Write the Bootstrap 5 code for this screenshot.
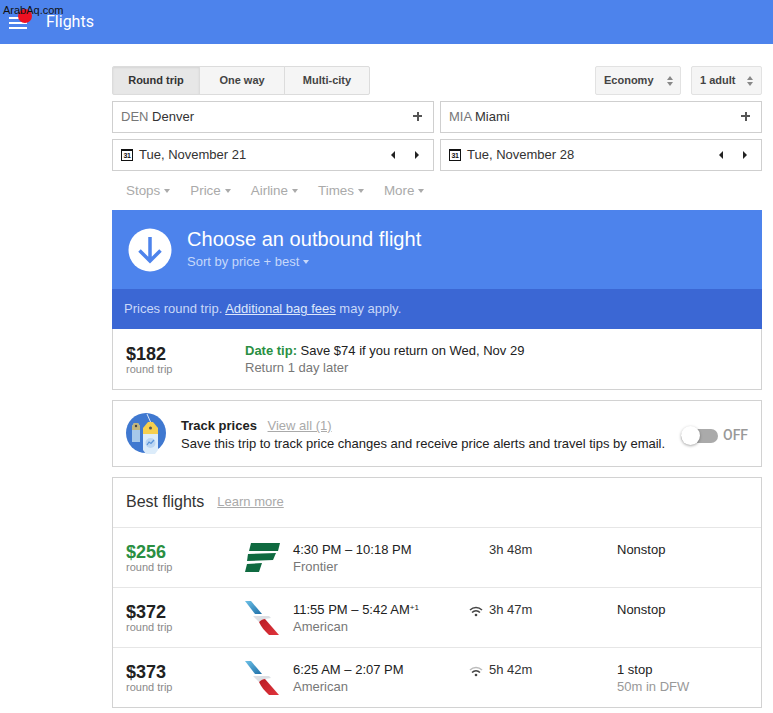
<!DOCTYPE html>
<html lang="en">
<head>
<meta charset="utf-8">
<title>Flights</title>
<link href="https://cdn.jsdelivr.net/npm/bootstrap@5.3.0/dist/css/bootstrap.min.css" rel="stylesheet">
<style>
html,body{height:713px;overflow:hidden}
body{font-family:"Liberation Sans",Arial,sans-serif;font-size:13px;color:#212121;background:#fff}
.topbar{height:44px;background:#4d83ec;padding-left:9px;position:relative}
.burger{width:18px;height:12px;display:flex;flex-direction:column;justify-content:space-between;margin-top:1px}
.burger i{display:block;height:2px;background:#fff}
.brand{font-family:Roboto,sans-serif;font-size:16px;color:#fff;margin-left:19px}
.wm{position:absolute;left:3px;top:3px;font-size:11px;line-height:14px;color:#111;z-index:2}
.dot{position:absolute;left:18px;top:9px;width:14px;height:14px;border-radius:50%;background:#ee1122}
.wrap{width:650px;margin-left:112px;padding-top:22px}
.seg{height:29px}
.segb{height:29px;background:#f5f5f5;border:1px solid #dcdcdc;font-weight:700;font-size:11px;color:#444;display:flex;align-items:center;justify-content:center;margin-left:-1px}
.segb:first-child{margin-left:0;border-radius:2px 0 0 2px}
.segb:last-child{border-radius:0 2px 2px 0}
.segb.on{background:#e7e7e7;color:#333;box-shadow:inset 0 1px 2px rgba(0,0,0,.08)}
.w1{width:88px}.w2{width:86px}.w3{width:86px}
.selb{height:29px;background:#f5f5f5;border:1px solid #e2e2e2;border-radius:2px;font-weight:700;font-size:11px;color:#444;display:flex;align-items:center;padding-left:8px;gap:13px}
.sel1{width:86px}.sel2{width:71px;gap:12px}
.updown{display:flex;flex-direction:column;gap:2px}
.up{width:0;height:0;border-left:3.5px solid transparent;border-right:3.5px solid transparent;border-bottom:4px solid #888}
.dn{width:0;height:0;border-left:3.5px solid transparent;border-right:3.5px solid transparent;border-top:4px solid #888}
.field{width:322px;height:32px;border:1px solid #cfcfcf;font-size:13px;padding:0 11px 0 8px;color:#333}
.field.dt{padding-right:14px}
.field span.code{color:#777}
.plus{width:9px;height:9px;position:relative;margin-bottom:2px}
.plus:before,.plus:after{content:"";position:absolute;background:#555}
.plus:before{left:0;right:0;top:3.5px;height:2px}
.plus:after{top:0;bottom:0;left:3.5px;width:2px}
.cal{width:12px;height:12px;border:1px solid #111;border-top-width:2px;font-size:7px;line-height:9px;text-align:center;color:#111;font-weight:700;margin-right:6px;letter-spacing:-.3px}
.arw{gap:20px}
.tl{width:0;height:0;border-top:4px solid transparent;border-bottom:4px solid transparent;border-right:4px solid #222}
.tr{width:0;height:0;border-top:4px solid transparent;border-bottom:4px solid transparent;border-left:4px solid #222}
.filters{height:39px;padding-left:14px;padding-top:2px;color:#aaa;font-size:13.4px;gap:20px}
.car{display:inline-block;width:0;height:0;border-left:3.5px solid transparent;border-right:3.5px solid transparent;border-top:4px solid currentColor;margin-left:4px;vertical-align:2px}
.hero{height:79px;background:#4d83ec;padding-left:16px;color:#fff}
.circ{width:44px;height:44px;margin-right:15px;flex:none}
.htxt{padding-top:2px}
.htitle{font-size:20px;line-height:23px;letter-spacing:.03px}
.hsub{font-size:13px;line-height:22px;color:#c6d8fa}
.note{height:40px;background:#3b67d4;color:#c9d8f8;padding-left:12px;font-size:13px}
.note a{color:#dde7fb}
.box{border:1px solid #d2d2d2}
.tipb{height:61px;border-top:0;padding-left:13px}
.pcol{width:119px;flex:none;margin-top:2px}
.price{font-size:18px;font-weight:700;line-height:19px;color:#212121}
.price.g{color:#2a8f42}
.rt{font-size:11px;line-height:12px;color:#8a8a8a;margin-top:-1px}
.tiptxt{font-size:13px;line-height:17px}
.gl{color:#2a8f42;font-weight:700}
.mut{color:#777}
.track{height:67px;margin-top:10px;padding-left:13px;position:relative}
.tico{width:41px;height:41px;flex:none;margin-right:14px}
.ttxt{font-size:13px;line-height:18px;margin-top:3px}
.ttxt a{color:#aaa;margin-left:7px}
.tog{position:absolute;left:568px;top:24px;display:flex;align-items:center}
.trk{width:37px;height:14px;border-radius:7px;background:#aaa;position:relative}
.knob{position:absolute;left:0;top:-3px;width:19px;height:19px;border-radius:50%;background:#fff;box-shadow:0 1px 3px rgba(0,0,0,.35)}
.off{color:#999;font-size:14px;margin-left:5px;font-family:Roboto,sans-serif;font-weight:500}
.best{margin-top:10px}
.bhead{height:49px;padding-left:13px;font-size:16px;color:#333;padding-bottom:2px}
.bhead a{font-size:13px;color:#aaa;margin-left:13px}
.frow{height:60px;border-top:1px solid #e6e6e6;padding:13px 0 0 13px;font-size:13px;line-height:17px}
.fl{width:47px;flex:none;margin-top:1px}
.fl svg{display:block}
.fl .aa{margin-top:-2px}
.tm{width:177px;flex:none;padding-left:1px}
.wf{width:20px;flex:none;padding-top:1px}
.du{width:128px;flex:none;color:#333}
.faint{color:#999}
sup{font-size:8px;top:-.5em}
</style>
</head>
<body>
<div class="topbar d-flex align-items-center">
  <div class="wm">ArabAq.com</div>
  <div class="dot"></div>
  <div class="burger"><i></i><i></i><i></i></div>
  <div class="brand">Flights</div>
</div>
<div class="wrap">
  <div class="d-flex justify-content-between seg">
    <div class="d-flex">
      <div class="segb on w1">Round trip</div>
      <div class="segb w2">One way</div>
      <div class="segb w3">Multi-city</div>
    </div>
    <div class="d-flex" style="gap:10px">
      <div class="selb sel1">Economy <div class="updown"><div class="up"></div><div class="dn"></div></div></div>
      <div class="selb sel2">1 adult <div class="updown"><div class="up"></div><div class="dn"></div></div></div>
    </div>
  </div>
  <div class="d-flex justify-content-between" style="margin-top:6px">
    <div class="field d-flex align-items-center justify-content-between"><div><span class="code">DEN</span> Denver</div><div class="plus"></div></div>
    <div class="field d-flex align-items-center justify-content-between"><div><span class="code">MIA</span> Miami</div><div class="plus"></div></div>
  </div>
  <div class="d-flex justify-content-between" style="margin-top:6px">
    <div class="field dt d-flex align-items-center justify-content-between"><div class="d-flex align-items-center"><div class="cal">31</div>Tue, November 21</div><div class="d-flex arw"><div class="tl"></div><div class="tr"></div></div></div>
    <div class="field dt d-flex align-items-center justify-content-between"><div class="d-flex align-items-center"><div class="cal">31</div>Tue, November 28</div><div class="d-flex arw"><div class="tl"></div><div class="tr"></div></div></div>
  </div>
  <div class="d-flex align-items-center filters">
    <div>Stops<span class="car"></span></div><div>Price<span class="car"></span></div><div>Airline<span class="car"></span></div><div>Times<span class="car"></span></div><div>More<span class="car"></span></div>
  </div>
  <div class="hero d-flex align-items-center">
    <svg class="circ" viewBox="0 0 44 44"><circle cx="22" cy="22" r="21.500" fill="#fff"/><path d="M22 9v24M11.500 22.500 22 33l10.500-10.500" fill="none" stroke="#4d83ec" stroke-width="3.500"/></svg>
    <div class="htxt">
      <div class="htitle">Choose an outbound flight</div>
      <div class="hsub">Sort by price + best<span class="car"></span></div>
    </div>
  </div>
  <div class="note d-flex align-items-center"><div>Prices round trip. <a href="#">Additional bag fees</a> may apply.</div></div>
  <div class="box tipb d-flex align-items-center">
    <div class="pcol"><div class="price">$182</div><div class="rt">round trip</div></div>
    <div class="tiptxt"><span class="gl">Date tip:</span> Save $74 if you return on Wed, Nov 29<br><span class="mut">Return 1 day later</span></div>
  </div>
  <div class="box track d-flex align-items-center">
    <svg class="tico" viewBox="0 0 41 41"><circle cx="20" cy="20" r="20" fill="#3f78d0"/><path d="M21 1 25 10" stroke="#dbe7f8" stroke-width="1"/><path d="M6 13l2-3h4l2 3v16H6z" fill="#a6c8ea"/><path d="M6 13l2-3h4l2 3v4H6z" fill="#c2b67c"/><circle cx="10" cy="13" r="1.200" fill="#444"/><path d="M17 15l5-6h5l5 6v6H17z" fill="#f6cf4f"/><circle cx="24.500" cy="15" r="1.500" fill="#555"/><path d="M17 21h15v16l-3 4H20l-3-4z" fill="#dcecfa"/><circle cx="24.500" cy="30" r="5" fill="#bcd6f2"/><path d="M21 32l2-3 2 1.500 3-3.500" fill="none" stroke="#5a94d8" stroke-width="1.200"/></svg>
    <div class="ttxt"><div><b>Track prices</b> <a href="#">View all (1)</a></div><div>Save this trip to track price changes and receive price alerts and travel tips by email.</div></div>
    <div class="tog"><div class="trk"><div class="knob"></div></div><div class="off">OFF</div></div>
  </div>
  <div class="box best">
    <div class="bhead d-flex align-items-center"><div>Best flights</div><a href="#">Learn more</a></div>
    <div class="frow d-flex">
      <div class="pcol"><div class="price g">$256</div><div class="rt">round trip</div></div>
      <div class="fl"><svg width="36" height="31" viewBox="0 0 36 31"><path d="M6 1H35L33 9H4z" fill="#0f6a40"/><path d="M3 12L31 11 28 18 2 19z" fill="#0f6a40"/><path d="M2 22L17 21 14 30H0z" fill="#0f6a40"/></svg></div>
      <div class="tm">4:30 PM – 10:18 PM<br><span class="mut">Frontier</span></div>
      <div class="wf"></div>
      <div class="du">3h 48m</div>
      <div>Nonstop</div>
    </div>
    <div class="frow d-flex">
      <div class="pcol"><div class="price">$372</div><div class="rt">round trip</div></div>
      <div class="fl"><svg class="aa" width="36" height="36" viewBox="0 0 36 36"><defs><linearGradient id="aab" x1="0" y1="0" x2="1" y2="1"><stop offset="0" stop-color="#6cc0e6"/><stop offset="1" stop-color="#1f6fa8"/></linearGradient><linearGradient id="aar" x1="0" y1="0" x2="1" y2="1"><stop offset="0" stop-color="#b81c24"/><stop offset="1" stop-color="#e0343c"/></linearGradient></defs><path d="M0 1H6L17 14H10Z" fill="url(#aab)"/><path d="M8 16H24L26 18 20 19C18 19 16 20 14 22Z" fill="#dcdfe4"/><path d="M14 22C16 20 18 19 20 19L34 35H24C20 31 16 27 14 22Z" fill="url(#aar)"/></svg></div>
      <div class="tm">11:55 PM – 5:42 AM<sup>+1</sup><br><span class="mut">American</span></div>
      <div class="wf"><svg width="14" height="11" viewBox="0 0 14 11"><path d="M1 4C4.500 .5 9.500 .5 13 4M3 6.500C5.300 4.300 8.700 4.300 11 6.500" fill="none" stroke="#444" stroke-width="1.500"/><circle cx="7" cy="9" r="1.300" fill="#444"/></svg></div>
      <div class="du">3h 47m</div>
      <div>Nonstop</div>
    </div>
    <div class="frow d-flex">
      <div class="pcol"><div class="price">$373</div><div class="rt">round trip</div></div>
      <div class="fl"><svg class="aa" width="36" height="36" viewBox="0 0 36 36"><path d="M0 1H6L17 14H10Z" fill="url(#aab)"/><path d="M8 16H24L26 18 20 19C18 19 16 20 14 22Z" fill="#dcdfe4"/><path d="M14 22C16 20 18 19 20 19L34 35H24C20 31 16 27 14 22Z" fill="url(#aar)"/></svg></div>
      <div class="tm">6:25 AM – 2:07 PM<br><span class="mut">American</span></div>
      <div class="wf"><svg width="14" height="11" viewBox="0 0 14 11"><path d="M1 4C4.500 .5 9.500 .5 13 4" fill="none" stroke="#bbb" stroke-width="1.500"/><path d="M3 6.500C5.300 4.300 8.700 4.300 11 6.500" fill="none" stroke="#444" stroke-width="1.500"/><circle cx="7" cy="9" r="1.300" fill="#444"/></svg></div>
      <div class="du">5h 42m</div>
      <div>1 stop<br><span class="faint">50m in DFW</span></div>
    </div>
  </div>
</div>
<script src="https://cdn.jsdelivr.net/npm/bootstrap@5.3.0/dist/js/bootstrap.bundle.min.js"></script>
</body>
</html>
